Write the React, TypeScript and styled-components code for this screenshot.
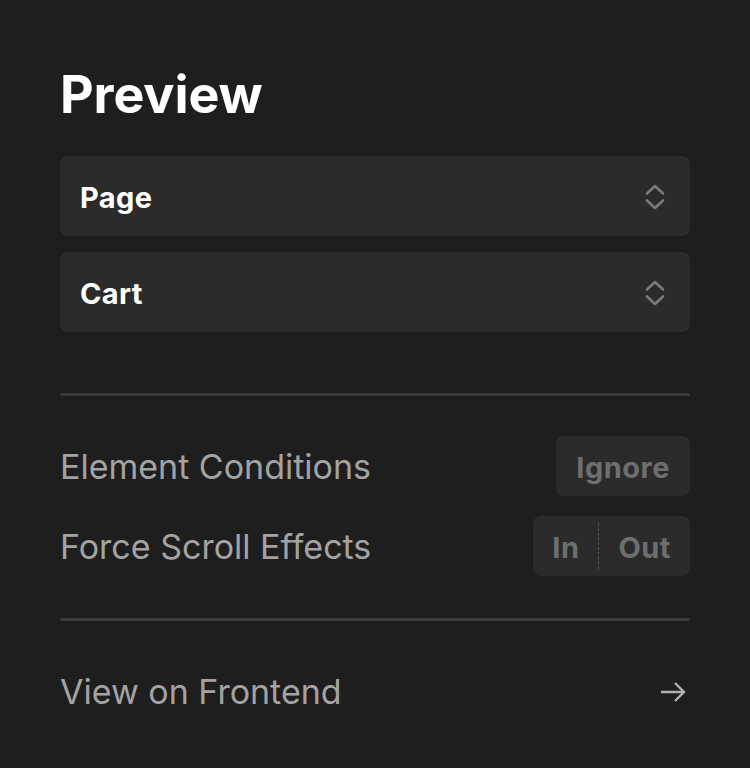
import React from "react";
import styled, { createGlobalStyle } from "styled-components";

const Global = createGlobalStyle`
  html, body { margin: 0; padding: 0; background: #1e1e1e; }
  body { font-family: Inter, "Noto Sans", sans-serif; }
`;

const Panel = styled.div`
  width: 750px;
  height: 768px;
  box-sizing: border-box;
  padding: 64px 60px 0 60px;
  background: #1e1e1e;
  display: flex;
  flex-direction: column;
`;

const Title = styled.h1`
  margin: 0;
  font-size: 52px;
  line-height: 62px;
  font-weight: 700;
  color: #ffffff;
  letter-spacing: -0.1px;
`;

const Selects = styled.div`
  display: flex;
  flex-direction: column;
  gap: 16px;
  margin-top: 30px;
`;

const Select = styled.div`
  height: 80px;
  border-radius: 8px;
  background: #2b2b2b;
  display: flex;
  align-items: center;
  justify-content: space-between;
  padding: 2px 24px 0 20px;
  box-sizing: border-box;
  color: #ffffff;
  font-size: 29px;
  font-weight: 700;
  letter-spacing: 0.4px;
`;

const Divider = styled.div<{ $top: number }>`
  height: 3px;
  border-radius: 2px;
  background: #3b3b3b;
  margin-top: ${(p) => p.$top}px;
`;

const Rows = styled.div`
  display: flex;
  flex-direction: column;
  gap: 20px;
  margin-top: 40px;
`;

const Row = styled.div`
  display: flex;
  align-items: center;
  justify-content: space-between;
  height: 60px;
`;

const Label = styled.span`
  color: #a3a3a3;
  font-size: 34px;
  font-weight: 400;
`;

const Chip = styled.div`
  height: 60px;
  border-radius: 8px;
  background: #2b2b2b;
  display: flex;
  align-items: center;
  color: #6e6e6e;
  font-size: 29px;
  font-weight: 700;
  letter-spacing: 0.5px;
`;

const ChipPart = styled.span<{ $divided?: boolean; $pad?: number }>`
  padding: 2px ${(p) => p.$pad ?? 20}px 0 ${(p) => p.$pad ?? 20}px;
  height: 46px;
  box-sizing: border-box;
  display: flex;
  align-items: center;
  border-left: ${(p) => (p.$divided ? "1px dashed #555555" : "none")};
`;

const LinkRow = styled.div`
  display: flex;
  align-items: center;
  justify-content: space-between;
  margin-top: 50px;
  color: #a3a3a3;
  font-size: 34px;
  padding-right: 4px;
`;

const Chevrons = () => (
  <svg width="22" height="28" viewBox="0 0 22 28" fill="none">
    <path d="M3 10.5 L11 3 L19 10.5" stroke="#7a7a7a" strokeWidth="2.6" strokeLinecap="round" strokeLinejoin="round" />
    <path d="M3 17.5 L11 25 L19 17.5" stroke="#7a7a7a" strokeWidth="2.6" strokeLinecap="round" strokeLinejoin="round" />
  </svg>
);

const Arrow = () => (
  <svg width="26" height="22" viewBox="0 0 26 22" fill="none">
    <path d="M1 11 H24 M15 2 L24 11 L15 20" stroke="#b0b0b0" strokeWidth="2.4" />
  </svg>
);

export default function App() {
  return (
    <>
      <Global />
      <Panel>
        <Title>Preview</Title>
        <Selects>
          <Select>
            Page
            <Chevrons />
          </Select>
          <Select>
            Cart
            <Chevrons />
          </Select>
        </Selects>
        <Divider $top={61} />
        <Rows>
          <Row>
            <Label>Element Conditions</Label>
            <Chip>
              <ChipPart>Ignore</ChipPart>
            </Chip>
          </Row>
          <Row>
            <Label>Force Scroll Effects</Label>
            <Chip>
              <ChipPart $pad={19}>In</ChipPart>
              <ChipPart $pad={19} $divided>Out</ChipPart>
            </Chip>
          </Row>
        </Rows>
        <Divider $top={42} />
        <LinkRow>
          View on Frontend
          <Arrow />
        </LinkRow>
      </Panel>
    </>
  );
}
